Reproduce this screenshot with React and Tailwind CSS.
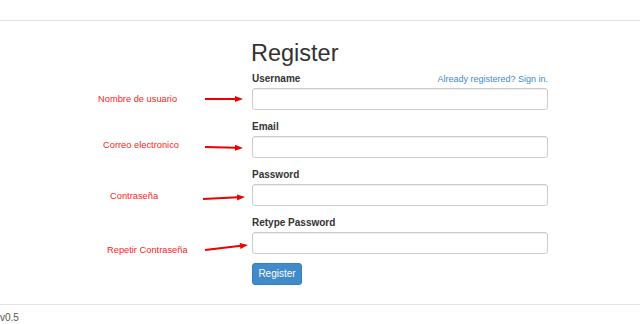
import React from "react";

function Arrow({ x1, y1, x2, y2 }) {
  const dx = x2 - x1;
  const dy = y2 - y1;
  const len = Math.sqrt(dx * dx + dy * dy);
  const ux = dx / len;
  const uy = dy / len;
  const hl = 8;
  const hw = 3;
  const bx = x2 - ux * hl;
  const by = y2 - uy * hl;
  const px = -uy;
  const py = ux;
  const pts = `${x2},${y2} ${bx + px * hw},${by + py * hw} ${bx - px * hw},${by - py * hw}`;
  return (
    <svg width="52" height="22" viewBox="0 0 52 22" className="ml-auto shrink-0 overflow-visible">
      <line x1={x1} y1={y1} x2={bx + ux} y2={by + uy} stroke="#ee0000" strokeWidth="2" />
      <polygon points={pts} fill="#ee0000" />
    </svg>
  );
}

function Field({ label, note, noteMl, noteMt, arrow, extra, type = "text" }) {
  return (
    <div className="grid grid-cols-[252px_296px] mt-[10px] first:mt-0">
      <div className="flex flex-col">
        <div className="h-[16px]" />
        <div className="h-[22px] flex items-start">
          <span
            className="text-[9.3px] leading-[12px] text-[#f22] whitespace-nowrap"
            style={{ marginLeft: noteMl, marginTop: noteMt }}
          >
            {note}
          </span>
          <Arrow {...arrow} />
        </div>
      </div>
      <div className="flex flex-col">
        <div className="flex justify-between items-center h-[14px] mb-[2px]">
          <span className="text-[10px] font-bold text-[#333] leading-[14px]">{label}</span>
          {extra}
        </div>
        <input
          type={type}
          className="block h-[22px] w-full border border-[#ccc] rounded-[3px] bg-white shadow-[inset_0_1px_1px_rgba(0,0,0,0.075)] outline-none"
        />
      </div>
    </div>
  );
}

export default function App() {
  return (
    <div
      className="w-[640px] h-[324px] bg-white overflow-hidden text-[#333]"
      style={{ fontFamily: '"Liberation Sans", Arial, sans-serif' }}
    >
      <div className="h-[21px] border-b border-[#e3e3e3]" />
      <div className="pt-[17px]">
        <div className="grid grid-cols-[252px_296px]">
          <div />
          <h2 className="text-[23.5px] leading-[30px] font-normal text-[#333] -ml-[1px]">Register</h2>
        </div>
        <div className="mt-[4px] flex flex-col">
          <Field
            label="Username"
            note="Nombre de usuario"
            noteMl={98}
            noteMt={5}
            arrow={{ x1: 5, y1: 11, x2: 43, y2: 11 }}
            extra={
              <a className="text-[9px] text-[#428bca] leading-[14px] cursor-pointer">
                Already registered? Sign in.
              </a>
            }
          />
          <Field
            label="Email"
            note="Correo electronico"
            noteMl={103}
            noteMt={3}
            arrow={{ x1: 5, y1: 11, x2: 43, y2: 12 }}
          />
          <Field
            label="Password"
            note="Contraseña"
            noteMl={110}
            noteMt={6}
            type="password"
            arrow={{ x1: 3, y1: 15, x2: 45, y2: 13 }}
          />
          <Field
            label="Retype Password"
            note="Repetir Contraseña"
            noteMl={107}
            noteMt={12}
            type="password"
            arrow={{ x1: 5, y1: 18, x2: 48, y2: 13 }}
          />
        </div>
        <div className="grid grid-cols-[252px_296px] mt-[9px]">
          <div />
          <div className="flex">
            <button className="block h-[22px] w-[50px] bg-[#428bca] border border-[#357ebd] rounded-[3px] text-white text-[10px] leading-none">
              Register
            </button>
          </div>
        </div>
      </div>
      <div className="mt-[19px] border-t border-[#e3e3e3] pt-[7px]">
        <span className="text-[10px] leading-[12px] text-[#555] block">v0.5</span>
      </div>
    </div>
  );
}
